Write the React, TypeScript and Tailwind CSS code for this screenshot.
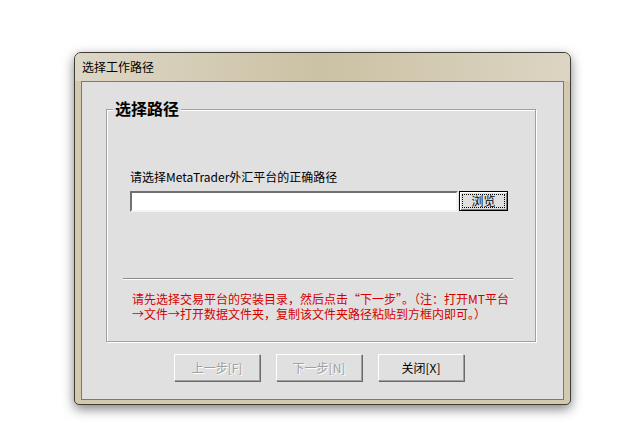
import React from 'react';

const font = { fontFamily: '"Noto Sans CJK SC", "Noto Sans", sans-serif' };

function Btn({ label, disabled }: { label: string; disabled?: boolean }) {
  return (
    <button
      className={`w-[86px] h-[27px] flex items-center justify-center text-[12px] bg-[#e0e0e0] border border-t-white border-l-white border-b-[#a0a0a0] border-r-[#a0a0a0] shadow-[1px_1px_0_#6a6a6a] ${
        disabled ? 'text-[#a0a0a0] [text-shadow:1px_1px_0_#fff]' : 'text-black'
      }`}
    >
      {label}
    </button>
  );
}

export default function App() {
  return (
    <div className="min-h-screen bg-white pt-[52px] pl-[74px]" style={font}>
      {/* Window */}
      <div className="w-[497px] h-[353px] flex flex-col rounded-t-[7px] rounded-b-[5px] border border-[#3f3d37] bg-[#d2c9ae] shadow-[0_4px_12px_rgba(0,0,0,0.5)]">
        <div className="h-[28px] flex items-center pl-[7px] rounded-t-[6px] bg-gradient-to-r from-[#ddd7c6] via-[#cbc1a4] to-[#dcd5c3] text-[12px] text-black">
          选择工作路径
        </div>

        {/* Client */}
        <div className="mx-[6px] mb-[4px] flex-1 border border-[#787878] bg-[#e0e0e0] pt-[27px] pl-[24px]">
          <div className="relative w-[430px] h-[233px] border border-[#a0a0a0] shadow-[inset_1px_1px_0_#fff,1px_1px_0_#fff] pl-[23px] pt-[59px]">
            <span className="absolute -top-[12px] left-[6px] px-[2px] bg-[#e0e0e0] text-[16px] leading-[20px] font-bold text-black">
              选择路径
            </span>

            <div className="text-[12px] leading-[16px] text-black">请选择MetaTrader外汇平台的正确路径</div>

            <div className="mt-[6px] flex items-start">
              <div className="w-[328px] h-[21px] bg-white border-2 border-t-[#707070] border-l-[#707070] border-b-[#f4f4f4] border-r-[#f4f4f4]" />
              <button className="ml-[1px] w-[49px] h-[20px] border border-black bg-[#e0e0e0] p-[2px] shadow-[inset_1px_1px_0_#fff,inset_-1px_-1px_0_#808080]">
                <span className="flex h-full items-center justify-center border border-dotted border-black text-[12px] leading-none text-black">
                  浏览
                </span>
              </button>
            </div>

            <div className="mt-[66px] -ml-[7px] w-[390px] border-t border-[#8a8a8a] border-b border-b-white" />

            <div className="mt-[11px] ml-[2px] flex flex-col text-[12px] leading-[15px] text-[#d40000]">
              <span>请先选择交易平台的安装目录，然后点击“下一步”。（注：打开MT平台</span>
              <span>→文件→打开数据文件夹，复制该文件夹路径粘贴到方框内即可。）</span>
            </div>
          </div>

          <div className="mt-[12px] ml-[68px] flex gap-[16px]">
            <Btn label="上一步[F]" disabled />
            <Btn label="下一步[N]" disabled />
            <Btn label="关闭[X]" />
          </div>
        </div>
      </div>
    </div>
  );
}
